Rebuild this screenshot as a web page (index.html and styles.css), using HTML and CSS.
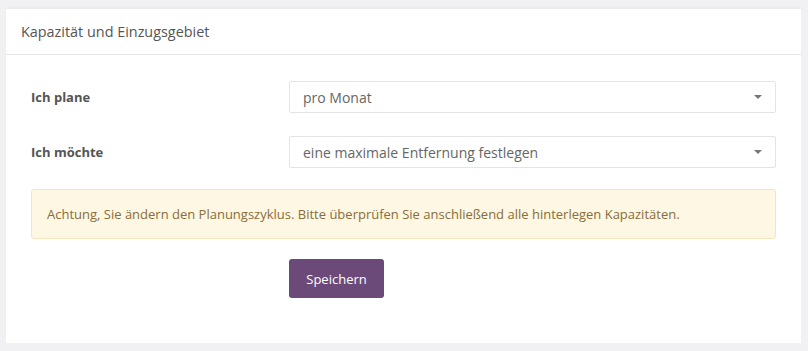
FILE: index.html
```html
<!DOCTYPE html>
<html lang="de">
<head>
<meta charset="utf-8">
<link rel="stylesheet" href="styles.css">
</head>
<body>
<div class="card">
  <div class="card-header">Kapazität und Einzugsgebiet</div>
  <div class="card-body">
    <div class="form-row">
      <label class="label">Ich plane</label>
      <div class="select"><span>pro Monat</span><span class="caret"></span></div>
    </div>
    <div class="form-row">
      <label class="label">Ich möchte</label>
      <div class="select"><span>eine maximale Entfernung festlegen</span><span class="caret"></span></div>
    </div>
    <div class="alert">Achtung, Sie ändern den Planungszyklus. Bitte überprüfen Sie anschließend alle hinterlegen Kapazitäten.</div>
    <div class="actions">
      <button class="btn">Speichern</button>
    </div>
  </div>
</div>
</body>
</html>
```
FILE: styles.css
```css
html, body {
  margin: 0;
  padding: 0;
  background: #f1f1f4;
  font-family: "Open Sans", "Noto Sans", sans-serif;
  font-size: 13px;
}
body {
  padding: 9px 7px 8px 6px;
}
.card {
  background: #fff;
  box-shadow: 0 -2px 2px rgba(0,0,0,0.03);
}
.card-header {
  height: 45px;
  border-bottom: 1px solid #e5e5ea;
  padding: 0 15px;
  display: flex;
  align-items: center;
  color: #555;
  font-size: 14.4px;
}
.card-body {
  padding: 26px 25px 45px 25px;
}
.form-row {
  display: grid;
  grid-template-columns: 258px 1fr;
  align-items: center;
  margin-bottom: 23px;
}
.form-row + .form-row {
  margin-bottom: 21px;
}
.label {
  font-weight: 700;
  color: #555;
}
.select {
  height: 30px;
  border: 1px solid #e3e3e8;
  border-radius: 2px;
  display: flex;
  align-items: center;
  justify-content: space-between;
  padding: 0 13px 0 13px;
  color: #666;
  font-size: 14px;
}
.caret {
  width: 0;
  height: 0;
  border-left: 4px solid transparent;
  border-right: 4px solid transparent;
  border-top: 4px solid #777;
}
.alert {
  height: 48px;
  border: 1px solid #f5e6c0;
  background: #fdf7e3;
  border-radius: 3px;
  display: flex;
  align-items: center;
  padding: 0 15px;
  color: #8a6d3b;
  font-size: 13px;
}
.actions {
  margin-top: 20px;
  padding-left: 258px;
}
.btn {
  width: 95px;
  height: 39px;
  background: #6b4a7a;
  color: #fff;
  border: none;
  border-radius: 3px;
  font-family: "Open Sans", "Noto Sans", sans-serif;
  font-size: 13px;
  padding: 0;
}
```
